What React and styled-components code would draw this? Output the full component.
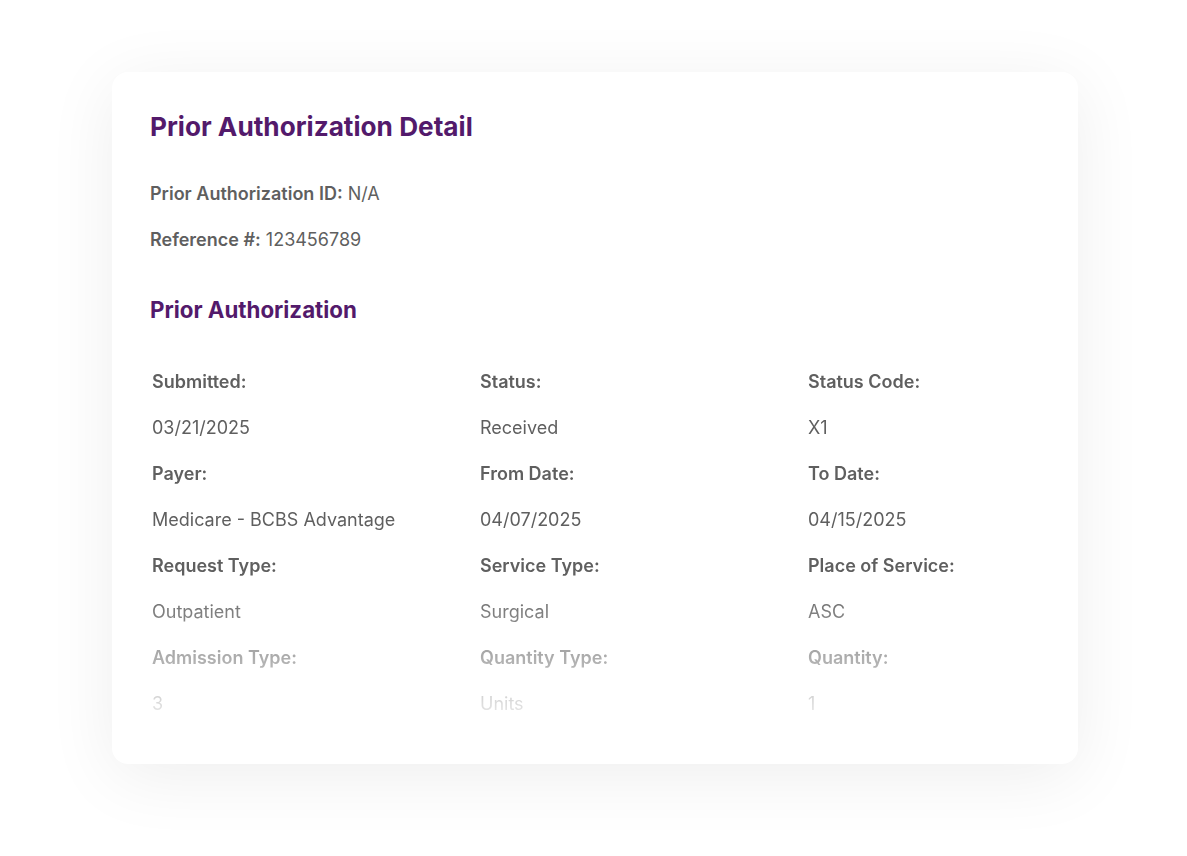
import React from 'react';
import styled, { createGlobalStyle } from 'styled-components';

const GlobalStyle = createGlobalStyle`
  html, body {
    margin: 0;
    padding: 0;
    background: #ffffff;
  }
  body {
    font-family: Inter, "Noto Sans", "Liberation Sans", sans-serif;
    -webkit-font-smoothing: antialiased;
  }
`;

const Page = styled.div`
  min-height: 856px;
  padding: 72px 0 0 112px;
  box-sizing: border-box;
`;

const Card = styled.section`
  width: 966px;
  box-sizing: border-box;
  padding: 40px 38px 48px;
  background: #ffffff;
  border-radius: 16px;
  box-shadow: 0 12px 70px rgba(0, 0, 0, 0.07);
`;

const Title = styled.h1`
  margin: 0;
  font-size: 26.2px;
  line-height: 30px;
  font-weight: 650;
  color: #531a6b;
`;

const InfoList = styled.div`
  display: flex;
  flex-direction: column;
  gap: 22px;
  margin-top: 40px;
`;

const InfoLine = styled.div`
  font-size: 18px;
  line-height: 24px;
  color: #5f5f5f;
`;

const Strong = styled.span`
  font-weight: 620;
`;

const SectionTitle = styled.h2`
  margin: 44px 0 0;
  font-size: 22.3px;
  line-height: 28px;
  font-weight: 650;
  color: #531a6b;
`;

/* the grid fades out towards the bottom of the card */
const FieldGrid = styled.div`
  display: grid;
  grid-template-columns: 328px 328px 1fr;
  row-gap: 22px;
  margin: 46px 0 0 2px;
  -webkit-mask-image: linear-gradient(to bottom, #000 0, #000 211px, rgba(0, 0, 0, 0) 368px);
  mask-image: linear-gradient(to bottom, #000 0, #000 211px, rgba(0, 0, 0, 0) 368px);
`;

const Cell = styled.div`
  font-size: 18px;
  line-height: 24px;
  color: #5f5f5f;
  font-weight: ${p => (p.$label ? 620 : 400)};
  white-space: nowrap;
`;

const rows = [
  [['Submitted:', '03/21/2025'], ['Status:', 'Received'], ['Status Code:', 'X1']],
  [['Payer:', 'Medicare - BCBS Advantage'], ['From Date:', '04/07/2025'], ['To Date:', '04/15/2025']],
  [['Request Type:', 'Outpatient'], ['Service Type:', 'Surgical'], ['Place of Service:', 'ASC']],
  [['Admission Type:', '3'], ['Quantity Type:', 'Units'], ['Quantity:', '1']],
];

const App = () => (
  <>
    <GlobalStyle />
    <Page>
      <Card>
        <Title>Prior Authorization Detail</Title>
        <InfoList>
          <InfoLine>
            <Strong>Prior Authorization ID:</Strong> N/A
          </InfoLine>
          <InfoLine>
            <Strong>Reference #:</Strong> 123456789
          </InfoLine>
        </InfoList>

        <SectionTitle>Prior Authorization</SectionTitle>
        <FieldGrid>
          {rows.map((row, i) => (
            <React.Fragment key={i}>
              {row.map(([label]) => (
                <Cell $label key={label}>{label}</Cell>
              ))}
              {row.map(([label, value]) => (
                <Cell key={label + '-v'}>{value}</Cell>
              ))}
            </React.Fragment>
          ))}
        </FieldGrid>
      </Card>
    </Page>
  </>
);

export default App;
